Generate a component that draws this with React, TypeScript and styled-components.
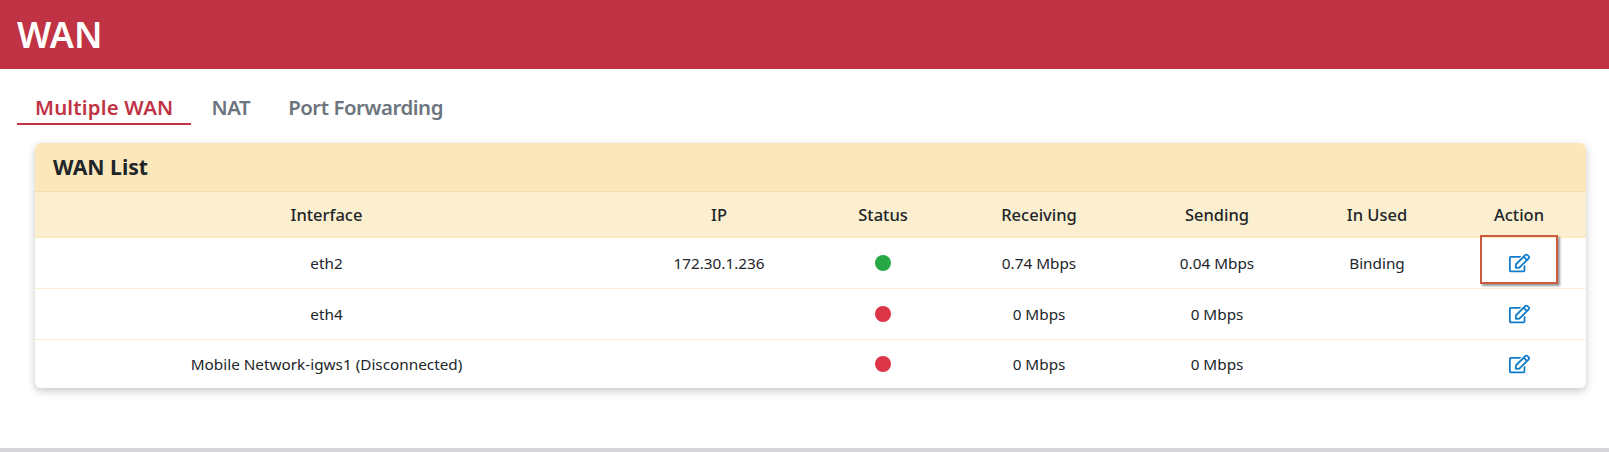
import React from "react";
import styled, { createGlobalStyle } from "styled-components";
import { FaRegEdit } from "react-icons/fa";

const Global = createGlobalStyle`
  html, body { margin: 0; padding: 0; background: #fff; }
  body { font-family: "Noto Sans", "Open Sans", sans-serif; color: #212529; height: 452px; overflow: hidden; }
`;
const Page = styled.div`
  height: 452px;
  display: flex;
  flex-direction: column;
  border-bottom: 4px solid #d6d6da;
  box-sizing: border-box;
`;
const Banner = styled.header`
  height: 69px;
  background: #c03344;
  display: flex;
  align-items: center;
  padding-left: 17px;
`;
const Title = styled.h1`
  margin: 0;
  color: #fff;
  font-size: 36px;
  font-weight: 600;
  line-height: 1;
`;
const Tabs = styled.nav`
  display: flex;
  gap: 2px;
  margin: 25px 0 0 17px;
  height: 31px;
`;
const Tab = styled.div<{ $active?: boolean }>`
  padding: 0 18px;
  font-size: 20.4px;
  font-weight: 600;
  line-height: 26px;
  letter-spacing: ${(p) => (p.$active ? "0.2px" : "-0.45px")};
  height: 31px;
  box-sizing: border-box;
  white-space: nowrap;
  color: ${(p) => (p.$active ? "#c03344" : "#6c757d")};
  border-bottom: 2px solid ${(p) => (p.$active ? "#c03344" : "transparent")};
`;
const Card = styled.section`
  margin: 18px 23px 0 35px;
  border-radius: 6px;
  background: #fff;
  box-shadow: 0 3px 8px rgba(0, 0, 0, 0.22);
  overflow: hidden;
`;
const CardHead = styled.div`
  height: 49px;
  box-sizing: border-box;
  background: #fbe7ba;
  border-bottom: 1px solid #f7dea6;
  padding-left: 18px;
  font-size: 21.2px;
  font-weight: 700;
  line-height: 47px;
`;
const Table = styled.table`
  width: 100%;
  table-layout: fixed;
  border-collapse: collapse;
  font-size: 15.3px;
`;
const Th = styled.th`
  height: 44px;
  padding: 0 0 1px;
  background: #fcefcf;
  border-bottom: 1px solid #fbe7ba;
  font-size: 16.5px;
  font-weight: 500;
  text-align: center;
`;
const Td = styled.td`
  height: 50px;
  padding: 0;
  text-align: center;
  border-bottom: 1px solid #fcefcf;
  tr:last-child > & { border-bottom: 0; height: 48px; }
`;
const ActionCell = styled(Td)`
  position: relative;
`;
const Dot = styled.span<{ $up?: boolean }>`
  display: block;
  width: 16px;
  height: 16px;
  margin: 0 auto;
  border-radius: 50%;
  background: ${(p) => (p.$up ? "#28a745" : "#dc3545")};
`;
const EditIcon = styled(FaRegEdit)`
  display: block;
  width: 21px;
  height: 20px;
  margin: 0 auto;
  color: #0e7cc9;
`;
const Callout = styled.div`
  position: absolute;
  left: 28px;
  top: -3px;
  width: 78px;
  height: 49px;
  box-sizing: border-box;
  border: 2px solid #ca5b3f;
  box-shadow: 2px 2px 2px rgba(70, 70, 70, 0.55);
`;

const widths = [583, 202, 126, 186, 170, 150, 134];
const heads = ["Interface", "IP", "Status", "Receiving", "Sending", "In Used", "Action"];
const rows = [
  { name: "eth2", ip: "172.30.1.236", up: true, rx: "0.74 Mbps", tx: "0.04 Mbps", used: "Binding", mark: true },
  { name: "eth4", ip: "", up: false, rx: "0 Mbps", tx: "0 Mbps", used: "", mark: false },
  { name: "Mobile Network-igws1 (Disconnected)", ip: "", up: false, rx: "0 Mbps", tx: "0 Mbps", used: "", mark: false },
];

export default function App() {
  return (
    <Page>
      <Global />
      <Banner><Title>WAN</Title></Banner>
      <Tabs>
        <Tab $active>Multiple WAN</Tab>
        <Tab>NAT</Tab>
        <Tab>Port Forwarding</Tab>
      </Tabs>
      <Card>
        <CardHead>WAN List</CardHead>
        <Table>
          <colgroup>{widths.map((w, i) => <col key={i} width={w} />)}</colgroup>
          <thead>
            <tr>{heads.map((h) => <Th key={h}>{h}</Th>)}</tr>
          </thead>
          <tbody>
            {rows.map((r) => (
              <tr key={r.name}>
                <Td>{r.name}</Td>
                <Td>{r.ip}</Td>
                <Td><Dot $up={r.up} /></Td>
                <Td>{r.rx}</Td>
                <Td>{r.tx}</Td>
                <Td>{r.used}</Td>
                <ActionCell>
                  <EditIcon />
                  {r.mark && <Callout />}
                </ActionCell>
              </tr>
            ))}
          </tbody>
        </Table>
      </Card>
    </Page>
  );
}
